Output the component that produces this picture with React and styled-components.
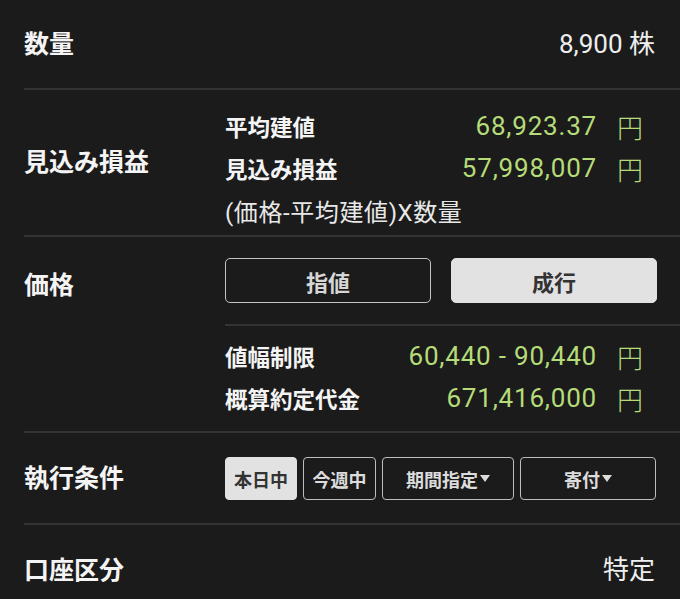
import React from "react";
import styled, { createGlobalStyle } from "styled-components";

const GlobalStyle = createGlobalStyle`
  html, body {
    margin: 0;
    padding: 0;
    background: #1b1b1b;
  }
  body {
    font-family: Roboto, "Noto Sans CJK JP", sans-serif;
    color: #f2f2f2;
  }
`;

const Screen = styled.div`
  width: 680px;
  height: 599px;
  overflow: hidden;
  background: #1b1b1b;
`;

const Section = styled.div`
  display: grid;
  grid-template-columns: 201px 1fr;
  margin-left: 24px;
  min-height: ${p => p.height || 0}px;
  border-bottom: ${p => (p.last ? "none" : "2px solid #333")};
`;

const LabelCell = styled.div`
  display: flex;
  align-items: center;
  align-self: ${p => (p.top ? "start" : "stretch")};
  height: ${p => (p.top ? `${p.top}px` : "auto")};
  padding-bottom: ${p => (p.top ? 0 : 5)}px;
  box-sizing: border-box;
  font-family: "Noto Sans CJK JP", sans-serif;
  font-weight: 700;
  font-size: 25px;
  color: #f4f4f4;
`;

const PlainValue = styled.div`
  display: flex;
  align-items: center;
  justify-content: flex-end;
  padding-right: 25px;
  padding-bottom: 5px;
  font-size: 26px;
  color: #eeeeee;
`;

const Content = styled.div`
  display: flex;
  flex-direction: column;
  padding: ${p => p.pad || "0"};
`;

const SubRow = styled.div`
  display: flex;
  align-items: center;
  height: 42px;
`;

const SubLabel = styled.div`
  flex: 1;
  font-family: "Noto Sans CJK JP", sans-serif;
  font-weight: 700;
  font-size: 22.5px;
  color: #f4f4f4;
`;

const Value = styled.div`
  font-size: 26px;
  color: #b5dc78;
  letter-spacing: 0.8px;
`;

const Unit = styled.span`
  font-family: "Noto Sans CJK JP", sans-serif;
  font-size: 26px;
  font-weight: 300;
  color: #b5dc78;
  margin-left: 20px;
  margin-right: 37px;
`;

const Note = styled.div`
  display: flex;
  align-items: center;
  height: 42px;
  font-size: 24px;
  letter-spacing: 0.6px;
  color: #e8e8e8;
`;

const InnerDivider = styled.div`
  height: 2px;
  background: #333;
`;

const ButtonRow = styled.div`
  display: flex;
  gap: ${p => p.gap}px;
  padding: ${p => p.pad};
`;

const PriceButton = styled.div`
  box-sizing: border-box;
  width: 206px;
  height: 45px;
  border-radius: 5px;
  display: flex;
  align-items: center;
  justify-content: center;
  font-family: "Noto Sans CJK JP", sans-serif;
  font-weight: 700;
  font-size: 22px;
  border: 1.5px solid ${p => (p.active ? "#e2e2e2" : "#c4c4c4")};
  background: ${p => (p.active ? "#e2e2e2" : "transparent")};
  color: ${p => (p.active ? "#333" : "#d6d6d6")};
`;

const CondButton = styled.div`
  box-sizing: border-box;
  width: ${p => p.w}px;
  height: 43px;
  border-radius: 4px;
  display: flex;
  align-items: center;
  justify-content: center;
  font-family: "Noto Sans CJK JP", sans-serif;
  font-weight: 700;
  font-size: 18px;
  border: 1.5px solid ${p => (p.active ? "#e2e2e2" : "#bdbdbd")};
  background: ${p => (p.active ? "#e2e2e2" : "transparent")};
  color: ${p => (p.active ? "#333" : "#dcdcdc")};
`;

const Caret = styled.span`
  display: inline-block;
  width: 0;
  height: 0;
  margin-left: 2px;
  border-left: 5px solid transparent;
  border-right: 5px solid transparent;
  border-top: 7px solid #dcdcdc;
`;

const App = () => (
  <>
    <GlobalStyle />
    <Screen>
      <Section height={88}>
        <LabelCell>数量</LabelCell>
        <PlainValue>8,900 株</PlainValue>
      </Section>

      <Section height={145}>
        <LabelCell>見込み損益</LabelCell>
        <Content pad="15px 0 4px">
          <SubRow>
            <SubLabel>平均建値</SubLabel>
            <Value>68,923.37</Value>
            <Unit>円</Unit>
          </SubRow>
          <SubRow>
            <SubLabel>見込み損益</SubLabel>
            <Value>57,998,007</Value>
            <Unit>円</Unit>
          </SubRow>
          <Note>(価格-平均建値)X数量</Note>
        </Content>
      </Section>

      <Section height={193}>
        <LabelCell top={92}>価格</LabelCell>
        <Content>
          <ButtonRow gap={20} pad="21px 0 21px">
            <PriceButton>指値</PriceButton>
            <PriceButton active>成行</PriceButton>
          </ButtonRow>
          <InnerDivider />
          <Content pad="9px 0 12px">
            <SubRow>
              <SubLabel>値幅制限</SubLabel>
              <Value>60,440 - 90,440</Value>
              <Unit>円</Unit>
            </SubRow>
            <SubRow>
              <SubLabel>概算約定代金</SubLabel>
              <Value>671,416,000</Value>
              <Unit>円</Unit>
            </SubRow>
          </Content>
        </Content>
      </Section>

      <Section height={90}>
        <LabelCell>執行条件</LabelCell>
        <ButtonRow gap={6} pad="24px 0 23px">
          <CondButton w={72} active>本日中</CondButton>
          <CondButton w={73}>今週中</CondButton>
          <CondButton w={132}>
            期間指定
            <Caret />
          </CondButton>
          <CondButton w={136}>
            寄付
            <Caret />
          </CondButton>
        </ButtonRow>
      </Section>

      <Section height={90} last>
        <LabelCell>口座区分</LabelCell>
        <PlainValue>特定</PlainValue>
      </Section>
    </Screen>
  </>
);

export default App;
